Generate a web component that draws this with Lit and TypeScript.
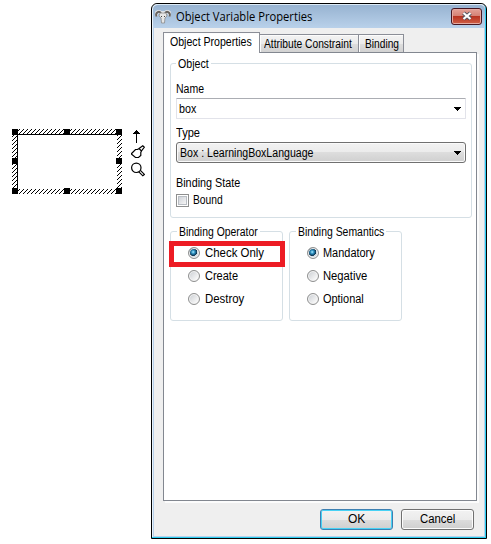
import { LitElement, html, svg, css } from "lit";
import { customElement, property } from "lit/decorators.js";

/** A single line of text condensed or widened to an exact width. */
@customElement("fit-text")
class FitText extends LitElement {
  @property({ type: Number }) w = 0;
  @property() text = "";
  static styles = css`
    :host { display: block; flex: none; white-space: nowrap; line-height: 16px; height: 16px; }
    .t { display: inline-block; transform-origin: 0 50%; vertical-align: top; }
  `;
  render() {
    return html`<span class="t">${this.text}</span>`;
  }
  updated() {
    const t = this.renderRoot.querySelector(".t") as HTMLElement;
    this.style.width = this.w + "px";
    t.style.transform = `scaleX(${this.w / t.offsetWidth})`;
  }
}

const label = (text: string, w: number, cls = "") =>
  html`<fit-text class=${cls} .text=${text} .w=${w}></fit-text>`;

const arrow = html`<svg class="arrow" width="7" height="4" shape-rendering="crispEdges"><path d="M0 0H7V1H6V2H5V3H4V4H3V3H2V2H1V1H0Z"/></svg>`;

const radio = (text: string, w: number, on = false) => html`
  <div class="radio"><i class="dot ${on ? "on" : ""}"></i>${label(text, w)}</div>`;

const handles = [0, 52, 104].flatMap((x) =>
  [0, 29, 59].filter((y) => !(x === 52 && y === 29)).map((y) => [x, y]));

@customElement("app-root")
class AppRoot extends LitElement {
  static styles = css`
    :host { display: block; position: relative; width: 491px; height: 544px; overflow: hidden; background: #fff;
      font: 12px "Liberation Sans", Arial, sans-serif; color: #000; }
    * { box-sizing: border-box; }
    svg { display: block; flex: none; }
    .shape { position: absolute; left: 12px; top: 129px; }
    .tools { position: absolute; left: 131px; top: 130px; }
    .win { position: absolute; left: 151px; top: 3px; width: 336px; height: 536px; background: #efefef;
      border: 1px solid #000; border-radius: 6px 6px 0 0; box-shadow: inset -1px -1px #27cdf0, inset 1px 1px #e9f3fb, inset -2px -2px #b9d1ea, inset 2px 0 #b9d1ea;
      display: flex; flex-direction: column; padding: 0 9px 0 11px; }
    .bar { height: 24px; margin: 0 -8px 0 -10px; padding: 0 3px 0 2px; display: flex; align-items: center; flex: none;
      border-radius: 5px 5px 0 0; border-top: 1px solid #dceaf6; background: linear-gradient(#97b3d1, #b9d1ea); }
    .title { font-family: "Open Sans", "Noto Sans", sans-serif; margin: 0 auto 0 5px; }
    .close { width: 31px; height: 17px; border: 1px solid #471722; border-radius: 3px; margin-top: -1px;
      box-shadow: inset 0 0 0 1px #e5aaa2; background: linear-gradient(#e4a197, #d58275 45%, #b93422 50%, #cf6047);
      display: grid; place-items: center; }
    .tabs { display: flex; height: 20px; align-items: flex-end; margin-top: 4px; flex: none; }
    .tab { height: 18px; border: 1px solid #8b8e97; border-width: 1px 1px 0 0; padding: 1px 0 0 4px;
      background: linear-gradient(#f3f3f3, #ebebeb 50%, #dedede 51%, #d2d2d2); box-shadow: inset 1px 1px #fcfcfc; flex: none; }
    .a { width: 97px; height: 21px; margin-bottom: -1px; padding: 1px 0 0 6px; border-left-width: 1px; background: #fff; position: relative; }
    .b { width: 99px; }
    .c { width: 45px; padding-left: 6px; }
    .pane { width: 314px; height: 449px; border: 1px solid #828790; background: #fff; box-shadow: 2px 2px #fcfcfc;
      padding: 10px 0 0 6px; flex: none; }
    .group { border: 1px solid #d5dfe5; border-radius: 3px; flex: none; }
    .legend { background: #fff; margin-top: -8px; padding-left: 2px; width: max-content; padding-right: 2px; }
    .obj { width: 302px; height: 155px; padding-left: 5px; }
    .combo { width: 290px; height: 21px; display: flex; align-items: center; justify-content: space-between; padding: 0 4px 0 2px; }
    .name { border: 1px solid #e2e3ea; border-top-color: #abadb3; border-radius: 1px; margin-top: 1px; }
    .type { border: 1px solid #707070; border-radius: 3px; box-shadow: inset 0 0 0 1px #fafafa; padding-left: 3px;
      background: linear-gradient(#f2f2f2, #ebebeb 49%, #dddddd 50%, #cfcfcf); margin-top: 1px; }
    .l1 { margin-top: 9px; } .l2 { margin-top: 6px; } .l3 { margin-top: 12px; }
    .check { display: flex; align-items: center; gap: 4px; margin-top: 1px; }
    .box { width: 13px; height: 13px; border: 1px solid #8e8f8f; padding: 1px; }
    .box i { display: block; height: 9px; border: 1px solid #b9bec4; background: linear-gradient(135deg, #cfd3d9, #f6f6f6); }
    .row { display: flex; gap: 6px; margin-top: 13px; }
    .small { width: 113px; height: 90px; padding-left: 6px; }
    .radio { display: flex; align-items: center; gap: 5px; margin: 0 0 7px 11px; height: 16px; }
    .small + .small .radio { gap: 4px; }
    .legend + .radio { margin-top: 5px; }
    .dot { width: 12px; height: 12px; border: 1px solid #8e8f8f; border-radius: 50%; flex: none;
      background: linear-gradient(135deg, #c8ccd1, #f8f8f8 80%); box-shadow: inset 0 0 0 1px #f4f4f4; }
    .on { background: radial-gradient(circle at 42% 40%, #b8ecfb 0, #3ba0cf 17%, #14567c 35%, #0f3551 44%, #d4dce2 50%); }
    .mark { position: absolute; left: 169px; top: 241px; width: 116px; height: 26px; border: 5px solid #ed1c24; }
    .btns { display: flex; gap: 8px; justify-content: flex-end; margin-top: 8px; padding-right: 3px; }
    .btn { width: 73px; height: 21px; padding-bottom: 1px; border: 1px solid #707070; border-radius: 3px; box-shadow: inset 0 0 0 1px #fcfcfc;
      background: linear-gradient(#f2f2f2, #ebebeb 50%, #dddddd 51%, #cfcfcf); display: flex; align-items: center; justify-content: center; }
    .ok { border-color: #3c7fb1; box-shadow: inset 0 0 0 1px #48d2f5; }
  `;
  render() {
    return html`
      <svg class="shape" width="110" height="65" shape-rendering="crispEdges">
        <defs><pattern id="h" width="4" height="4" patternUnits="userSpaceOnUse">
          <path d="M3 0h1v1h-1zM2 1h1v1h-1zM1 2h1v1h-1zM0 3h1v1h-1z"/></pattern></defs>
        <path fill="url(#h)" fill-rule="evenodd" d="M0 0H110V65H0ZM5 5V60H105V5Z"/>
        <path d="M5 5H105V6H6V60H5Z"/>
        ${handles.map(([x, y]) => svg`<rect x=${x} y=${y} width="6" height="6"/>`)}
      </svg>
      <svg class="tools" width="14" height="48" fill="none" stroke="#000">
        <path d="M5 0h1v1h1v1h1v1h1v1h-3v9h-1v-9h-3v-1h1v-1h1v-1h1z" fill="#000" stroke="none" shape-rendering="crispEdges"/>
        <g stroke-width="1.2">
          <path d="M.6 23.5L4.5 19.5H6.5L8 18.5L10.5 21L9.8 22.5V25.5L7.5 27.5H4.5L.6 24.2ZM8 18.5L11.8 15.8L13.3 17.2L10.5 21"/>
          <circle cx="5.3" cy="37.8" r="4.7"/><path d="M7.8 41.8L11.8 45.8L13.4 44.4L9.4 40.4"/>
        </g>
      </svg>
      <div class="win">
        <div class="bar">
          <svg width="16" height="16" viewBox="0 0 16 16">
            <path d="M1.5 7C0 3 4 1.500 6 4L10 4C12 1.500 16 3 14.500 7" fill="none" stroke="#eee" stroke-width="3.4"/>
            <path d="M1.500 7.500C0 3.500 4 1.500 6 4M14.500 7.500C16 3.500 12 1.500 10 4" fill="none" stroke="#66625f" stroke-width="2"/>
            <path d="M5 4H11L12 7L10 9L9.500 14H6.500L6 9L4 7Z" fill="#e6e6e6" stroke="#8a8a8a" stroke-width=".8"/>
            <path d="M6 7L7 8M10 7L9 8" stroke="#444"/>
          </svg>
          ${label("Object Variable Properties", 136, "title")}
          <div class="close"><svg width="12" height="10" viewBox="0 0 12 10">
            <path d="M2.5 2L9.5 8M9.5 2L2.5 8" stroke="#53545f" stroke-width="4"/>
            <path d="M2.5 2L9.5 8M9.5 2L2.5 8" stroke="#fff" stroke-width="2.2"/></svg></div>
        </div>
        <div class="tabs">
          <div class="tab a">${label("Object Properties", 82)}</div>
          <div class="tab b">${label("Attribute Constraint", 88)}</div>
          <div class="tab c">${label("Binding", 34)}</div>
        </div>
        <div class="pane">
          <div class="group obj">
            <div class="legend">${label("Object", 31)}</div>
            ${label("Name", 28, "l1")}
            <div class="combo name">${label("box", 17)}${arrow}</div>
            ${label("Type", 24, "l2")}
            <div class="combo type">${label("Box : LearningBoxLanguage", 133)}${arrow}</div>
            ${label("Binding State", 64, "l3")}
            <div class="check"><span class="box"><i></i></span>${label("Bound", 30)}</div>
          </div>
          <div class="row">
            <div class="group small">
              <div class="legend">${label("Binding Operator", 79)}</div>
              ${radio("Check Only", 59, true)}${radio("Create", 33)}${radio("Destroy", 39)}
            </div>
            <div class="group small">
              <div class="legend">${label("Binding Semantics", 86)}</div>
              ${radio("Mandatory", 52, true)}${radio("Negative", 44)}${radio("Optional", 41)}
            </div>
          </div>
        </div>
        <div class="btns">
          <div class="btn ok">${label("OK", 17)}</div>
          <div class="btn">${label("Cancel", 35)}</div>
        </div>
      </div>
      <div class="mark"></div>`;
  }
}
